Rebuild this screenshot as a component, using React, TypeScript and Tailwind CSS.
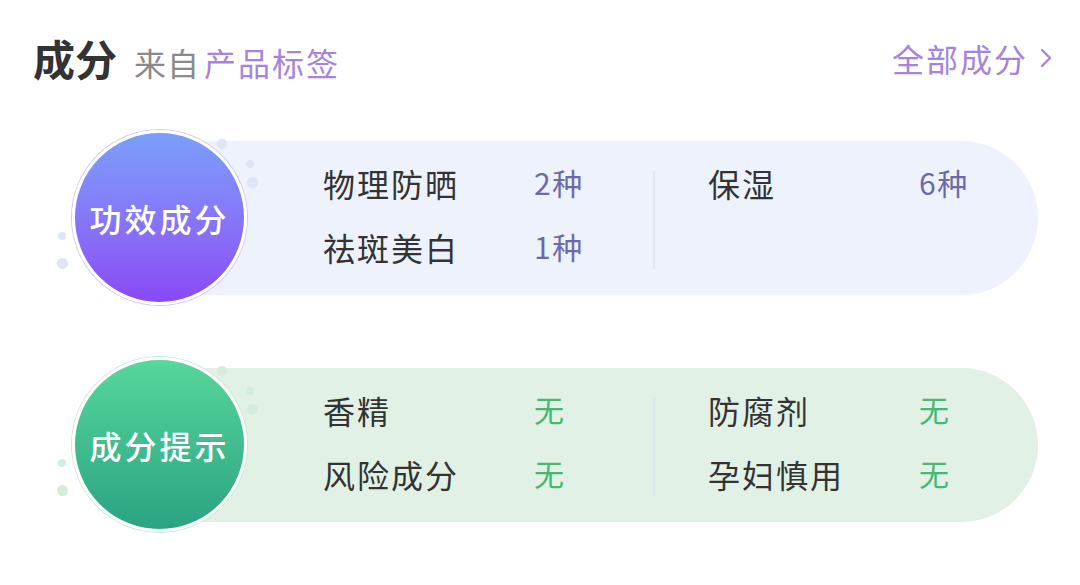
import React from 'react'

type Item = { label: string; value: string }

type CardProps = {
  title: string
  circle: string
  ring: string
  pill: string
  dot: string
  valueColor: string
  left: Item[]
  right: Item[]
}

const FONT = '"Noto Sans CJK SC", "Noto Sans", sans-serif'

function Column({ items, valueColor }: { items: Item[]; valueColor: string }) {
  return (
    <div className="flex w-[330px] shrink-0 flex-col">
      {items.map(it => (
        <div key={it.label} className="flex h-[64px] items-center">
          <span className="w-[211px] text-[32px] tracking-[2px] text-[#333333]">{it.label}</span>
          <span className={`text-[30px] tracking-[1.5px] ${valueColor}`}>{it.value}</span>
        </div>
      ))}
    </div>
  )
}

function Card({ title, circle, ring, pill, dot, valueColor, left, right }: CardProps) {
  return (
    <div className="relative flex items-center pl-[72px]">
      {/* decorative bubbles */}
      <span className={`absolute left-[217px] top-[9px] h-[10px] w-[10px] rounded-full ${dot}`} />
      <span className={`absolute left-[246px] top-[30px] h-[8px] w-[8px] rounded-full ${dot}`} />
      <span className={`absolute left-[247px] top-[47px] h-[11px] w-[11px] rounded-full ${dot}`} />
      <span className={`absolute left-[58px] top-[102px] h-[8px] w-[8px] rounded-full ${dot}`} />
      <span className={`absolute left-[57px] top-[128px] h-[11px] w-[11px] rounded-full ${dot}`} />

      <div className={`relative z-10 flex h-[175px] w-[175px] shrink-0 items-center justify-center rounded-full border-[3px] border-white ring-1 ${ring} ${circle}`}>
        <span className="text-[32px] font-medium tracking-[3px] text-white">{title}</span>
      </div>

      <div className={`-ml-[46px] flex h-[154px] w-[837px] items-start rounded-r-full pl-[122px] pt-[10px] ${pill}`}>
        <Column items={left} valueColor={valueColor} />
        <div className="mt-[20px] h-[98px] w-[2px] shrink-0 bg-[#dfe2ee]/80" />
        <div className="ml-[53px]">
          <Column items={right} valueColor={valueColor} />
        </div>
      </div>
    </div>
  )
}

export default function App() {
  return (
    <div className="h-[585px] w-[1080px] overflow-hidden bg-white" style={{ fontFamily: FONT }}>
      <div className="flex items-center justify-between pl-[33px] pr-[26px] pt-[26px]">
        <div className="flex items-baseline">
          <span className="text-[42px] font-bold text-[#333333]">成分</span>
          <span className="ml-[17px] text-[32px] tracking-[1px] text-[#8a8a8a]">来自</span>
          <span className="ml-[4px] text-[32px] tracking-[2px] text-[#a683dc]">产品标签</span>
        </div>
        <div className="flex items-center text-[#a683dc]">
          <span className="text-[32px] tracking-[2px]">全部成分</span>
          <svg className="ml-[10px]" width="16" height="22" viewBox="0 0 16 22" fill="none">
            <path d="M4 3 L12 11 L4 19" stroke="#a683dc" strokeWidth="2.4" strokeLinecap="round" strokeLinejoin="round" />
          </svg>
        </div>
      </div>

      <div className="mt-[41px] flex flex-col gap-[52px]">
        <Card
          title="功效成分"
          circle="bg-gradient-to-b from-[#7b9efb] to-[#8a48f5]"
          ring="ring-[#cfcaf0]"
          pill="bg-[#eef2fd]"
          dot="bg-[#dfe4f6]"
          valueColor="text-[#6b69a8]"
          left={[
            { label: '物理防晒', value: '2种' },
            { label: '祛斑美白', value: '1种' },
          ]}
          right={[{ label: '保湿', value: '6种' }]}
        />
        <Card
          title="成分提示"
          circle="bg-gradient-to-b from-[#56d79b] to-[#2aa383]"
          ring="ring-[#c9ead6]"
          pill="bg-[#e2f1e5]"
          dot="bg-[#d3ecdc]"
          valueColor="text-[#48b677]"
          left={[
            { label: '香精', value: '无' },
            { label: '风险成分', value: '无' },
          ]}
          right={[
            { label: '防腐剂', value: '无' },
            { label: '孕妇慎用', value: '无' },
          ]}
        />
      </div>
    </div>
  )
}
